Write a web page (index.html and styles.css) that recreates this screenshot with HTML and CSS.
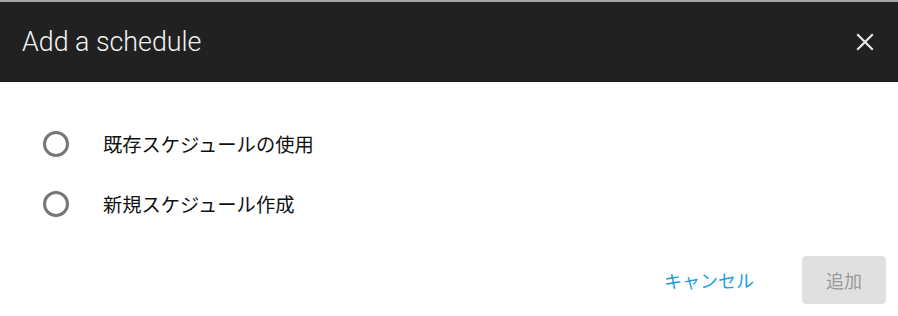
FILE: index.html
```html
<!DOCTYPE html>
<html lang="ja">
<head>
<meta charset="utf-8">
<link rel="stylesheet" href="styles.css">
</head>
<body>
<div class="dialog">
  <header class="dialog-header">
    <h1 class="dialog-title">Add a schedule</h1>
    <button class="close-btn" aria-label="close">
      <svg width="18" height="18" viewBox="0 0 18 18"><path d="M2 2L16 16M16 2L2 16" stroke="#e8e8e8" stroke-width="2.2" stroke-linecap="square"/></svg>
    </button>
  </header>
  <main class="dialog-body">
    <label class="option"><span class="radio"></span><span class="option-text">既存スケジュールの使用</span></label>
    <label class="option"><span class="radio"></span><span class="option-text">新規スケジュール作成</span></label>
  </main>
  <footer class="dialog-footer">
    <button class="btn-cancel">キャンセル</button>
    <button class="btn-add">追加</button>
  </footer>
</div>
</body>
</html>
```
FILE: styles.css
```css
html, body { margin: 0; padding: 0; background: #ffffff; }
body { font-family: "Noto Sans CJK JP", "Noto Sans", sans-serif; }
.dialog { width: 898px; height: 316px; border-top: 2px solid #a6a6a6; box-sizing: border-box; display: flex; flex-direction: column; }
.dialog-header { height: 80px; background: #212121; display: flex; align-items: center; justify-content: space-between; padding: 0 24px 0 22px; }
.dialog-title { margin: 0; font-family: Roboto, "Liberation Sans", sans-serif; font-weight: 300; font-size: 26.8px; color: #f2f2f2; }
.close-btn { background: none; border: none; padding: 0; width: 18px; height: 18px; display: flex; }
.dialog-body { padding: 32px 0 0 43px; display: flex; flex-direction: column; }
.option { display: flex; align-items: center; height: 60px; }
.radio { width: 20px; height: 20px; border: 3px solid #767676; border-radius: 50%; box-sizing: content-box; margin-right: 34px; }
.option-text { font-size: 19.3px; color: #111111; font-weight: 400; }
.dialog-footer { display: flex; justify-content: flex-end; align-items: center; gap: 48px; padding: 22px 12px 0 0; }
.btn-cancel { background: none; border: none; padding: 0; font-family: inherit; font-size: 18px; color: #1ba1e2; }
.btn-add { width: 84px; height: 48px; background: #e0e0e0; border: none; border-radius: 4px; font-family: inherit; font-size: 18px; color: #9a9a9a; }
```
